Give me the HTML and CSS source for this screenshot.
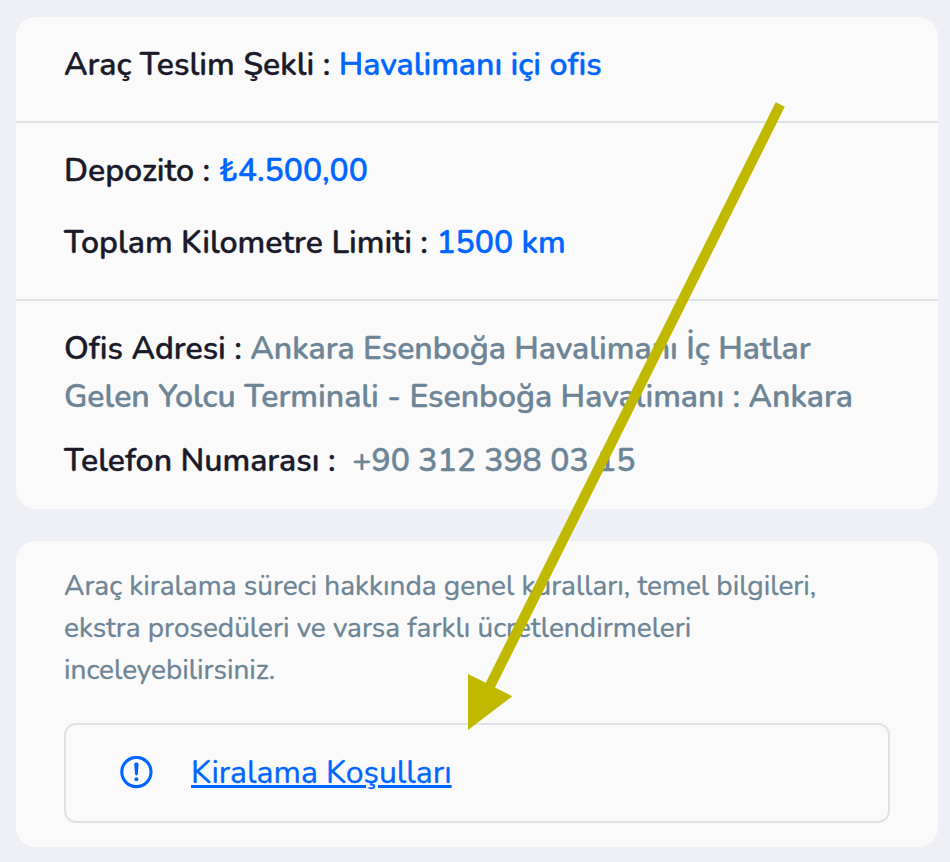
FILE: index.html
```html
<!DOCTYPE html>
<html lang="tr">
	<head>
		<meta charset="utf-8">
		<title>Araç Teslim Bilgileri</title>
		<link rel="stylesheet" href="styles.css">
	</head>
	<body>
		<div class="card">
			<div class="section">
				<div class="row">Araç Teslim Şekli : <span class="value">Havalimanı içi ofis</span></div>
			</div>
			<div class="section">
				<div class="row">Depozito : <span class="value">₺4.500,00</span></div>
				<div class="row">Toplam Kilometre Limiti : <span class="value">1500 km</span></div>
			</div>
			<div class="section contact">
				<div class="row">Ofis Adresi : <span class="muted">Ankara Esenboğa Havalimanı İç Hatlar<br>Gelen Yolcu Terminali - Esenboğa Havalimanı : Ankara</span></div>
				<div class="row">Telefon Numarası :&nbsp; <span class="muted">+90 312 398 03 15</span></div>
			</div>
		</div>
		<div class="card terms">
			<p class="info">Araç kiralama süreci hakkında genel kuralları, temel bilgileri,<br>ekstra prosedüleri ve varsa farklı ücretlendirmeleri<br>inceleyebilirsiniz.</p>
			<div class="linkBox">
				<svg class="icon" width="34" height="34" viewBox="0 0 34 34">
					<circle cx="17.4" cy="16" r="14.6" fill="none" stroke="#0066ff" stroke-width="3.1"/>
					<path d="M15.2 8.6Q15.2 6.6 17.4 6.6T19.6 8.6L18.8 18Q18.7 19.4 17.4 19.4T16 18Z" fill="#0066ff"/>
					<circle cx="17.4" cy="23.2" r="2" fill="#0066ff"/>
				</svg>
				<a class="link" href="#">Kiralama Koşulları</a>
			</div>
		</div>
		<svg class="arrow" width="950" height="862" viewBox="0 0 950 862">
			<path d="M775.7 102.2L784.8 106.8L495 687.5L512.4 696.3L468 730V674L485.8 682.8Z" fill="#c0b900"/>
		</svg>
	</body>
</html>
```

FILE: styles.css
```css
body {
	margin: 0;
	padding: 17px 12px 15px 16px;
	background: #EFF0F6;
	color: #1A1A2B;
	font-family: "Nunito", "Noto Sans", sans-serif;
	font-size: 32px;
	line-height: 48px;
	-webkit-text-stroke: 0.35px;
}
.card {
	border-radius: 20px;
	background: #FAFAFA;
	white-space: nowrap;
}
.section {
	display: flex;
	flex-direction: column;
	gap: 24px;
	padding: 24px 48px 32px;
	border-bottom: 2px solid #DFE2E7;
}
.section.contact {
	gap: 16px;
	padding-bottom: 24px;
	border-bottom: none;
}
.row {
	font-weight: 600;
	letter-spacing: -0.02px;
}
.value {
	color: #0066FF;
}
.muted {
	color: #6D8596;
}
.terms {
	margin-top: 32px;
	padding: 24px 48px;
}
.info {
	margin: 0 0 32px;
	color: #6D8596;
	font-size: 28px;
	line-height: 42px;
}
.linkBox {
	display: flex;
	align-items: center;
	gap: 38px;
	box-sizing: border-box;
	height: 100px;
	padding: 0 53px;
	border: 2px solid #DFE2E7;
	border-radius: 12px;
}
.link {
	color: #0066FF;
	text-decoration-thickness: 3px;
}
.arrow {
	position: absolute;
	top: 0;
	left: 0;
	pointer-events: none;
}
```
